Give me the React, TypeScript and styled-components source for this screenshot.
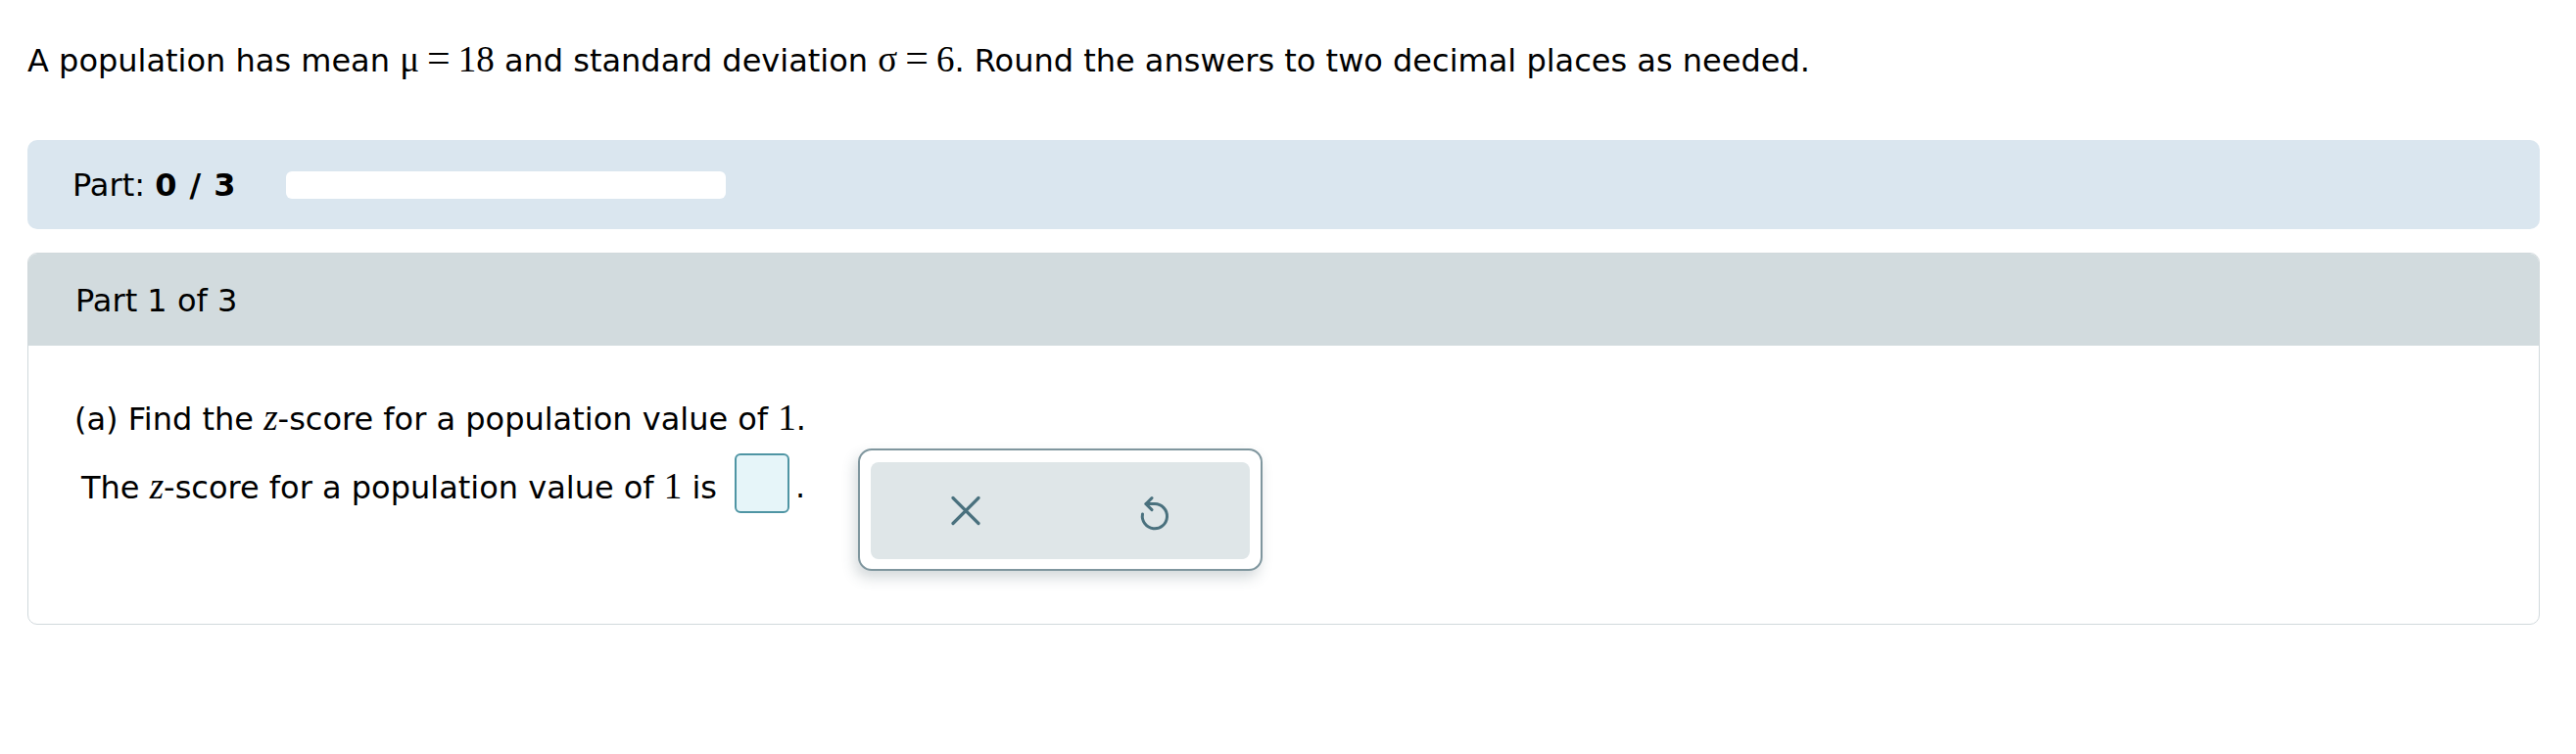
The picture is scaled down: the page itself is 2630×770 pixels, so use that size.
import React from "react";
import styled, { createGlobalStyle } from "styled-components";

const GlobalStyle = createGlobalStyle`
  body {
    margin: 0;
    background: #ffffff;
    color: #000000;
    font-family: "DejaVu Sans", Verdana, sans-serif;
  }
`;

const Page = styled.div`
  padding: 39px 37px 0 28px;
  font-size: 32px;
  line-height: 40px;
`;

const Intro = styled.p`
  margin: 0;
  white-space: nowrap;
`;

// math bits are set in a serif face, a little larger than the text
const MathText = styled.span<{ $italic?: boolean }>`
  font-family: "Liberation Serif", "Times New Roman", serif;
  font-size: 37px;
  font-style: ${(p) => (p.$italic ? "italic" : "normal")};
`;

const Equals = styled.span`
  font-family: "Liberation Serif", "Times New Roman", serif;
  font-size: 42px;
  margin: 0 8px;
`;

const ProgressPanel = styled.div`
  margin-top: 61px;
  display: flex;
  align-items: center;
  gap: 50px;
  padding: 26px 46px 25px;
  background-color: #dae6ef;
  border-radius: 10px;
`;

const ProgressLabel = styled.span`
  b {
    font-weight: bold;
    letter-spacing: 1px;
  }
`;

const ProgressTrack = styled.div`
  width: 449px;
  height: 28px;
  background-color: #ffffff;
  border-radius: 6px;
`;

const PartCard = styled.section`
  margin-top: 24px;
  border: 1px solid #d1d9dc;
  border-radius: 10px;
  overflow: hidden;
`;

const CardHeader = styled.div`
  padding: 28px 48px 26px;
  background-color: #d2dbde;
`;

const CardBody = styled.div`
  padding: 54px 48px 113px 47px;
`;

const Question = styled.div`
  white-space: nowrap;
`;

const AnswerRow = styled.div`
  margin-top: 15px;
  padding-left: 7px;
  display: flex;
  align-items: flex-start;
`;

const AnswerLine = styled.div`
  position: relative;
  display: flex;
  align-items: flex-start;
`;

const AnswerText = styled.span`
  margin-top: 14px;
  white-space: nowrap;
`;

const AnswerBox = styled.div`
  box-sizing: border-box;
  width: 56px;
  height: 61px;
  margin: 0 6px 0 18px;
  background-color: #e6f5f9;
  border: 2px solid #4f95a4;
  border-radius: 6px;
`;

const Period = styled.span`
  margin-top: 14px;
`;

const Toolbar = styled.div`
  position: absolute;
  top: -5px;
  left: calc(100% + 54px);
  box-sizing: border-box;
  width: 413px;
  height: 125px;
  padding: 12px 11px 10px;
  background-color: #ffffff;
  border: 2px solid #7f969e;
  border-radius: 14px;
  box-shadow: -3px 7px 14px rgba(60, 80, 90, 0.22);
`;

const ToolbarInner = styled.div`
  height: 100%;
  display: grid;
  grid-template-columns: 1fr 1fr;
  background-color: #dfe6e8;
  border-radius: 8px;
`;

const ToolButton = styled.button`
  display: flex;
  align-items: center;
  justify-content: center;
  padding: 0;
  border: none;
  background: transparent;
  color: #4a717e;
  cursor: pointer;
`;

const ClearIcon = () => (
  <svg width="40" height="40" viewBox="0 0 40 40" fill="none">
    <path
      d="M7 6.5 L33 32.5 M33 6.5 L7 32.5"
      stroke="currentColor"
      strokeWidth="3.2"
      strokeLinecap="round"
    />
  </svg>
);

const UndoIcon = () => (
  <svg width="40" height="40" viewBox="0 0 40 40" fill="none">
    <path
      d="M11 12.6 H20 A12.6 12.6 0 1 1 7.5 23"
      stroke="currentColor"
      strokeWidth="3"
      strokeLinecap="round"
    />
    <path
      d="M17 6.6 L11 12.6 L17 18.6"
      stroke="currentColor"
      strokeWidth="3"
      strokeLinecap="round"
      strokeLinejoin="round"
    />
  </svg>
);

const App = () => {
  return (
    <>
      <GlobalStyle />
      <Page>
        <Intro>
          A population has mean <MathText>μ</MathText>
          <Equals>=</Equals>
          <MathText>18</MathText> and standard deviation <MathText>σ</MathText>
          <Equals>=</Equals>
          <MathText>6</MathText>. Round the answers to two decimal places as needed.
        </Intro>

        <ProgressPanel>
          <ProgressLabel>
            Part: <b>0 / 3</b>
          </ProgressLabel>
          <ProgressTrack />
        </ProgressPanel>

        <PartCard>
          <CardHeader>Part 1 of 3</CardHeader>
          <CardBody>
            <Question>
              (a) Find the <MathText $italic>z</MathText>-score for a population value of{" "}
              <MathText>1</MathText>.
            </Question>
            <AnswerRow>
              <AnswerLine>
                <AnswerText>
                  The <MathText $italic>z</MathText>-score for a population value of{" "}
                  <MathText>1</MathText> is
                </AnswerText>
                <AnswerBox />
                <Period>.</Period>
                <Toolbar>
                  <ToolbarInner>
                    <ToolButton aria-label="Clear">
                      <ClearIcon />
                    </ToolButton>
                    <ToolButton aria-label="Undo">
                      <UndoIcon />
                    </ToolButton>
                  </ToolbarInner>
                </Toolbar>
              </AnswerLine>
            </AnswerRow>
          </CardBody>
        </PartCard>
      </Page>
    </>
  );
};

export default App;
